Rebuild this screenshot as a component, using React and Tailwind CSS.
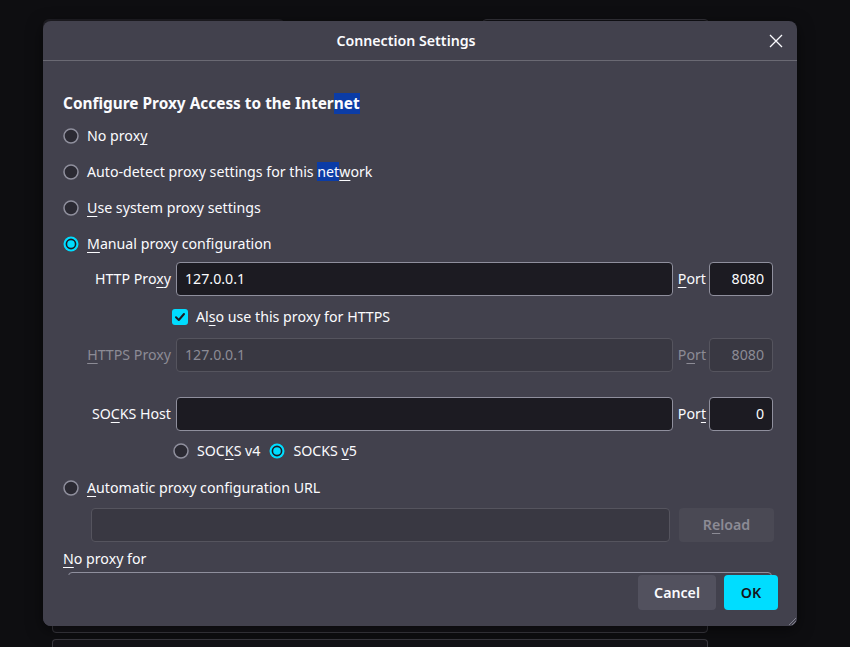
import { useState } from 'react'

const FONT = { fontFamily: '"Noto Sans", "Open Sans", sans-serif' }

function Radio({ checked, onClick }) {
  return (
    <svg width="16" height="16" viewBox="0 0 16 16" className="shrink-0" onClick={onClick}>
      {checked ? (
        <>
          <circle cx="8" cy="8" r="7.5" fill="#00ddff" />
          <circle cx="8" cy="8" r="4.6" fill="#00ddff" stroke="#1c1b22" strokeWidth="1.6" />
        </>
      ) : (
        <circle cx="8" cy="8" r="7" fill="#2b2a33" stroke="#8f8f9d" strokeWidth="1.5" />
      )}
    </svg>
  )
}

function Key({ children }) {
  return <span className="underline underline-offset-[3px] decoration-1">{children}</span>
}

function Sel({ children }) {
  return <span className="bg-[#0b3ca6]">{children}</span>
}

function Field({ value, disabled, right, className }) {
  return (
    <div
      className={
        'h-[34px] flex items-center px-2 rounded-[4px] border text-[14.2px] ' +
        (right ? 'justify-end ' : '') +
        (disabled
          ? 'bg-[#393842] border-[#55545e] text-[#8c8b95] '
          : 'bg-[#1c1b22] border-[#8f8f9d] text-[#fbfbfe] ') +
        (className || '')
      }
    >
      {value}
    </div>
  )
}

function ProxyRow({ label, value, port, disabled, className }) {
  const txt = disabled ? 'text-[#8c8b95]' : 'text-[#fbfbfe]'
  return (
    <div className={'flex items-center pl-[20px] pr-[24px] ' + (className || '')}>
      <div className={'w-[113px] text-right pr-[5px] ' + txt}>{label}</div>
      <Field value={value} disabled={disabled} className="flex-1" />
      <div className={'pl-[5px] pr-[3px] ' + txt}>{port.label}</div>
      <Field value={port.value} disabled={disabled} right className="w-[64px]" />
    </div>
  )
}

export default function App() {
  const [mode, setMode] = useState('manual')
  const [socks, setSocks] = useState('v5')
  const [alsoHttps, setAlsoHttps] = useState(true)

  const options = [
    { id: 'none', label: <>No prox<Key>y</Key></> },
    { id: 'auto', label: <>Auto-detect proxy settings for this <Sel>net</Sel><Key>w</Key>ork</> },
    { id: 'system', label: <><Key>U</Key>se system proxy settings</> },
    { id: 'manual', label: <><Key>M</Key>anual proxy configuration</> },
  ]

  return (
    <div className="relative w-[850px] h-[647px] overflow-hidden bg-[#0e0e11]" style={FONT}>
      {/* page behind the dialog */}
      <div className="flex flex-col h-full">
        <div className="flex pt-[19px]">
          <div className="ml-[43px] w-[242px] h-[40px] rounded-t-[6px] bg-[#1f1e24]" />
          <div className="ml-[196px] w-[229px] h-[40px] rounded-[6px] border border-[#34333a] bg-[#111115]" />
        </div>
        <div className="mt-auto flex flex-col gap-[6px] pl-[52px]">
          <div className="w-[656px] h-[34px] rounded-[4px] border border-[#3a3940] bg-[#141318]" />
          <div className="w-[656px] h-[8px] rounded-t-[4px] border border-b-0 border-[#3a3940] bg-[#141318]" />
        </div>
      </div>

      {/* dialog */}
      <div className="absolute left-[43px] top-[21px] w-[754px] h-[605px] rounded-[8px] bg-[#42414d] text-[#fbfbfe] text-[14.2px] flex flex-col overflow-hidden shadow-[0_4px_16px_rgba(0,0,0,0.5)]">
        <div className="relative h-[40px] shrink-0 flex items-center justify-center pr-[28px] border-b border-[#6a6973]">
          <span className="text-[14.2px] font-semibold">Connection Settings</span>
          <svg className="absolute right-[14px] top-[13px]" width="14" height="14" viewBox="0 0 14 14">
            <path d="M1 1 L13 13 M13 1 L1 13" stroke="#fbfbfe" strokeWidth="1.3" fill="none" />
          </svg>
        </div>

        <div className="flex-1 overflow-hidden pt-[32px]">
          <div className="pl-[20px] h-[22px] flex items-center text-[15.4px] font-bold">
            <span>Configure Proxy Access to the Inter<Sel>net</Sel></span>
          </div>

          <div className="mt-[3px] flex flex-col">
            {options.map(o => (
              <div
                key={o.id}
                className="h-[36px] flex items-center gap-[8px] pl-[20px] cursor-default"
                onClick={() => setMode(o.id)}
              >
                <Radio checked={mode === o.id} />
                <span>{o.label}</span>
              </div>
            ))}
          </div>

          <ProxyRow
            label={<>HTTP Pro<Key>x</Key>y</>}
            value="127.0.0.1"
            port={{ label: <><Key>P</Key>ort</>, value: '8080' }}
          />

          <div className="h-[42px] flex items-center gap-[8px] pl-[129px]">
            <div
              className="w-[16px] h-[16px] rounded-[3px] bg-[#00ddff] flex items-center justify-center"
              onClick={() => setAlsoHttps(v => !v)}
            >
              {alsoHttps && (
                <svg width="12" height="12" viewBox="0 0 12 12">
                  <path d="M2 6.3 L4.8 9 L10 3" stroke="#1c1b22" strokeWidth="2" fill="none" strokeLinecap="round" strokeLinejoin="round" />
                </svg>
              )}
            </div>
            <span>Al<Key>s</Key>o use this proxy for HTTPS</span>
          </div>

          <ProxyRow
            label={<><Key>H</Key>TTPS Proxy</>}
            value="127.0.0.1"
            disabled
            port={{ label: <>P<Key>o</Key>rt</>, value: '8080' }}
          />

          <ProxyRow
            className="mt-[25px]"
            label={<>SO<Key>C</Key>KS Host</>}
            value=""
            port={{ label: <>Por<Key>t</Key></>, value: '0' }}
          />

          <div className="h-[40px] flex items-center pl-[130px]">
            <div className="flex items-center gap-[8px]" onClick={() => setSocks('v4')}>
              <Radio checked={socks === 'v4'} />
              <span>SOC<Key>K</Key>S v4</span>
            </div>
            <div className="flex items-center gap-[8px] ml-[9px]" onClick={() => setSocks('v5')}>
              <Radio checked={socks === 'v5'} />
              <span>SOCKS <Key>v</Key>5</span>
            </div>
          </div>

          <div className="h-[34px] flex items-center gap-[8px] pl-[20px]" onClick={() => setMode('pac')}>
            <Radio checked={mode === 'pac'} />
            <span><Key>A</Key>utomatic proxy configuration URL</span>
          </div>

          <div className="mt-[3px] flex items-center pl-[48px] pr-[23px] gap-[9px]">
            <Field value="" disabled className="flex-1" />
            <div className="w-[95px] h-[34px] rounded-[4px] bg-[#4a4954] text-[#8c8b95] font-semibold flex items-center justify-center">
              R<Key>e</Key>load
            </div>
          </div>

          <div className="pl-[20px] mt-[6px] h-[22px] flex items-center">
            <span><Key>N</Key>o proxy for</span>
          </div>
          <div className="ml-[25px] mr-[25px] mt-[2px] h-[60px] rounded-[4px] border border-[#8f8f9d] bg-[#42414d]" />
        </div>

        <div className="relative shrink-0 h-[51px] flex items-start justify-end gap-[8px] pr-[19px] bg-[#42414d]">
          <div className="w-[78px] h-[35px] rounded-[4px] bg-[#52515e] font-semibold flex items-center justify-center">
            Cancel
          </div>
          <div className="w-[54px] h-[35px] rounded-[4px] bg-[#00ddff] text-[#15141a] font-semibold flex items-center justify-center">
            OK
          </div>
          <svg className="absolute right-0 bottom-0" width="10" height="10" viewBox="0 0 10 10">
            <path d="M9 2 L2 9 M9 5 L5 9 M9 8 L8 9" stroke="#8f8f9d" strokeWidth="0.8" />
          </svg>
        </div>
      </div>
    </div>
  )
}
